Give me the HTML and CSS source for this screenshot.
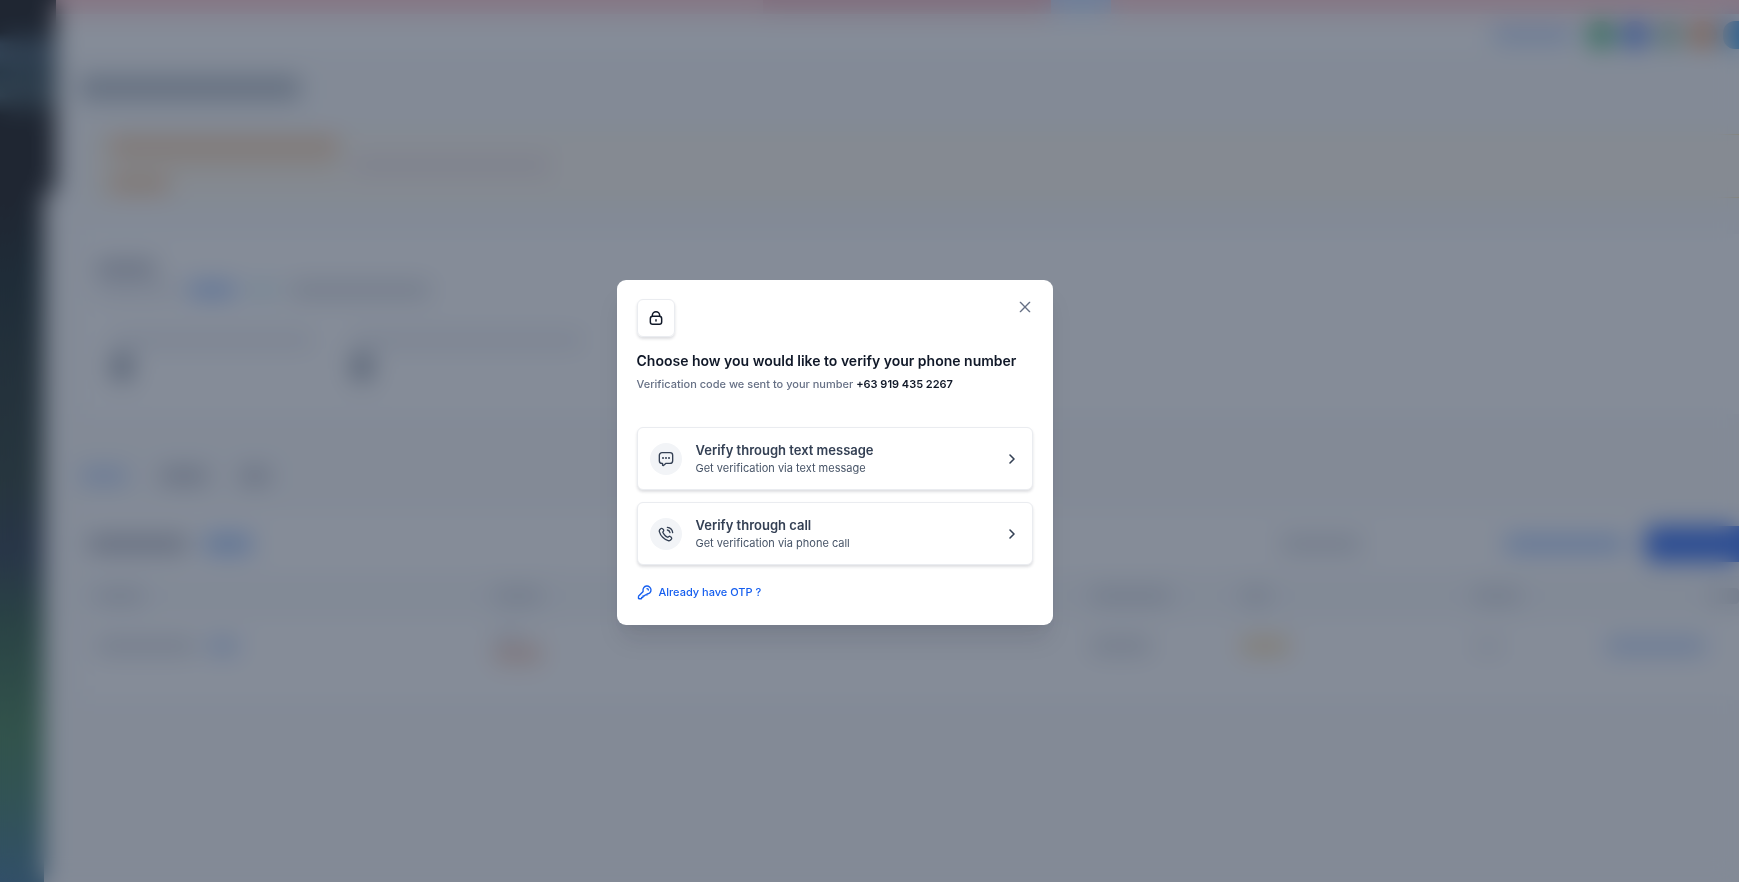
FILE: index.html
```
<!DOCTYPE html>
<html lang="en">
<head>
    <meta charset="UTF-8">
    <meta name="viewport" content="width=device-width, initial-scale=1.0">
    <title>Verify phone number</title>
    <link rel="stylesheet" href="styles.css">
</head>
<body>
    <div class="page" aria-hidden="true">
        <aside class="sidebar">
            <div class="sidebar-top"></div>
            <div class="sidebar-nav"></div>
        </aside>

        <div class="content">
            <div class="notice"><span class="notice-mark"></span><span class="notice-link"></span></div>
            <header class="topbar">
                <span class="bar bar-blue w-80"></span>
                <span class="dot dot-green"></span>
                <span class="dot dot-blue"></span>
                <span class="dot dot-sage"></span>
                <span class="dot dot-orange"></span>
                <span class="dot dot-sky"></span>
            </header>

            <main class="main">
                <div class="page-title"></div>

                <section class="warning">
                    <span class="bar bar-amber w-230"></span>
                    <div class="line">
                        <span class="bar bar-sand w-230"></span>
                        <span class="bar bar-rose w-200"></span>
                    </div>
                    <span class="bar bar-amber w-60"></span>
                </section>

                <section class="panel overview">
                    <span class="bar bar-dark w-60"></span>
                    <div class="line overview-line">
                        <span class="bar bar-light w-80"></span>
                        <span class="bar bar-link w-48"></span>
                        <span class="bar bar-cyan w-30"></span>
                        <span class="bar bar-gray w-140"></span>
                    </div>
                    <div class="stats">
                        <div class="stat"><span class="bar bar-light w-200"></span><span class="figure"></span></div>
                        <div class="stat"><span class="bar bar-light w-230"></span><span class="figure"></span></div>
                    </div>
                </section>

                <nav class="tabs">
                    <span class="bar bar-blue w-48"></span>
                    <span class="bar bar-dark w-48"></span>
                    <span class="bar bar-dark w-30"></span>
                </nav>

                <section class="panel records">
                    <div class="records-head">
                        <span class="bar bar-dark w-100"></span>
                        <span class="bar bar-link w-48"></span>
                        <div class="actions">
                            <span class="bar bar-gray w-80"></span>
                            <span class="bar bar-link w-120"></span>
                            <span class="primary"></span>
                        </div>
                    </div>
                    <table class="table">
                        <thead>
                            <tr>
                                <th class="col-name"><span class="bar bar-gray w-48"></span></th>
                                <th class="col-type"><span class="bar bar-gray w-48"></span></th>
                                <th class="col-owner"><span class="bar bar-gray w-80"></span></th>
                                <th class="col-status"><span class="bar bar-gray w-30"></span></th>
                                <th class="col-count"><span class="bar bar-gray w-48"></span></th>
                                <th><span class="bar bar-gray w-30 to-end"></span></th>
                            </tr>
                        </thead>
                        <tbody>
                            <tr>
                                <td><div class="line"><span class="bar bar-gray w-100"></span><span class="bar bar-blue w-30"></span></div></td>
                                <td><span class="bar bar-light w-30"></span><span class="bar bar-red w-48"></span></td>
                                <td><span class="bar bar-gray w-60"></span></td>
                                <td><span class="bar bar-yellow w-48"></span></td>
                                <td><span class="bar bar-light w-30"></span></td>
                                <td><span class="bar bar-blue w-100"></span></td>
                            </tr>
                        </tbody>
                    </table>
                </section>
            </main>
        </div>
    </div>

    <div class="overlay">
        <div class="modal" role="dialog" aria-modal="true" aria-labelledby="modalTitle">
            <div class="modal-top">
                <div class="modal-icon">
                    <svg width="16" height="16" viewBox="0 0 24 24" fill="none" stroke="currentColor" stroke-width="2.2" stroke-linecap="round" stroke-linejoin="round">
                        <path d="M6.500 9.500V8a5.500 5.500 0 0 1 11 0v1.500"/>
                        <rect x="3.500" y="9.500" width="17" height="12" rx="3.500"/>
                        <path d="M12 14.500v2"/>
                    </svg>
                </div>
                <button class="close" type="button" aria-label="Close">
                    <svg width="16" height="16" viewBox="0 0 24 24" fill="none" stroke="currentColor" stroke-width="2" stroke-linecap="round">
                        <path d="M19 5 5 19M5 5l14 14"/>
                    </svg>
                </button>
            </div>

            <h1 id="modalTitle">Choose how you would like to verify your phone number</h1>
            <p class="subtitle">Verification code we sent to your number <strong>+63 919 435 2267</strong></p>

            <div class="options">
                <button class="option" type="button">
                    <span class="option-icon">
                        <svg width="16" height="16" viewBox="0 0 24 24" fill="none" stroke="currentColor" stroke-width="2" stroke-linecap="round" stroke-linejoin="round">
                            <path d="M6 2.500h12a4 4 0 0 1 4 4v8a4 4 0 0 1-4 4h-6L8.200 21.600c-.6.5-1.400.1-1.400-.6v-2.500H6a4 4 0 0 1-4-4v-8a4 4 0 0 1 4-4z"/>
                            <path stroke-width="3" d="M7.500 10.500h.01M12 10.500h.01M16.500 10.500h.01"/>
                        </svg>
                    </span>
                    <span class="option-text">
                        <span class="option-title">Verify through text message</span>
                        <span class="option-desc">Get verification via text message</span>
                    </span>
                    <svg class="chevron" width="16" height="16" viewBox="0 0 24 24" fill="none" stroke="currentColor" stroke-width="2.400" stroke-linecap="round" stroke-linejoin="round">
                        <path d="m9 18 6-6-6-6"/>
                    </svg>
                </button>
                <button class="option" type="button">
                    <span class="option-icon">
                        <svg width="16" height="16" viewBox="0 0 24 24" fill="none" stroke="currentColor" stroke-width="2" stroke-linecap="round" stroke-linejoin="round">
                            <path d="M14.050 6A5 5 0 0 1 18 9.950M14.050 2A9 9 0 0 1 22 9.940M10.230 13.860a14.600 14.600 0 0 1-2.850-4.010c-.060-.130-.090-.190-.120-.280a1.040 1.040 0 0 1 .150-.870c.050-.070.110-.130.220-.240.350-.350.530-.530.640-.700a2 2 0 0 0 0-2.180c-.110-.180-.290-.350-.640-.700l-.200-.200c-.530-.530-.800-.800-1.080-.940a2 2 0 0 0-1.810 0c-.280.140-.550.410-1.080.940l-.160.160c-.530.530-.800.800-1 1.160-.220.400-.380 1.020-.380 1.480 0 .410.080.690.240 1.250a19 19 0 0 0 4.870 8.270 19 19 0 0 0 8.270 4.870c.560.160.840.240 1.250.240.460 0 1.080-.160 1.480-.380.360-.200.630-.470 1.160-1l.160-.160c.530-.530.800-.800.940-1.080a2 2 0 0 0 0-1.810c-.140-.280-.410-.550-.940-1.080l-.200-.200c-.350-.350-.520-.530-.700-.640a2 2 0 0 0-2.180 0c-.170.110-.350.290-.700.640-.110.110-.170.170-.240.220-.240.170-.590.230-.870.150-.090-.030-.150-.060-.280-.120a14.600 14.600 0 0 1-4.010-2.850z"/>
                        </svg>
                    </span>
                    <span class="option-text">
                        <span class="option-title">Verify through call</span>
                        <span class="option-desc">Get verification via phone call</span>
                    </span>
                    <svg class="chevron" width="16" height="16" viewBox="0 0 24 24" fill="none" stroke="currentColor" stroke-width="2.400" stroke-linecap="round" stroke-linejoin="round">
                        <path d="m9 18 6-6-6-6"/>
                    </svg>
                </button>
            </div>

            <a class="otp-link" href="#otp">
                <svg width="16" height="16" viewBox="0 0 24 24" fill="none" stroke="currentColor" stroke-width="2" stroke-linecap="round" stroke-linejoin="round">
                    <path d="M17 9c0-.5-.2-1-.6-1.400A2 2 0 0 0 15 7m0 8a6 6 0 1 0-5.900-4.900c.1.500.1.700.1.900 0 .2-.1.300-.2.400-.1.200-.2.300-.5.600l-5.300 5.300c-.4.400-.6.500-.7.700l-.2.500c-.1.200-.1.500-.1 1v1.400c0 .4 0 .6.100.8l.3.300c.2.100.4.100.8.100H6c.3 0 .4 0 .5-.2.500-.1.500-.2.500-.5V20h1.500c.3 0 .5-.2.500-.5V18h1.600c.2 0 .4-.1.600-.3l.8-.8c.3-.3.400-.4.600-.500a.9.900 0 0 1 .4-.2c.2-.1.400 0 .900.100.300 0 .700.100 1.100.100z" />
                </svg>
                <span>Already have OTP ?</span>
            </a>
        </div>
    </div>
</body>
</html>
```
FILE: styles.css
```
* {
    box-sizing: border-box;
}
body {
    margin: 0;
    font-family: Inter, Arial, sans-serif;
    background-color: #f9fafb;
    color: #101828;
}
button {
    font-family: inherit;
    cursor: pointer;
}

/* Page behind the dialog */
.page {
    display: flex;
    height: 100vh;
    overflow: hidden;
}
.sidebar {
    display: flex;
    flex-direction: column;
    flex: none;
    width: 56px;
}
.sidebar-top {
    height: 192px;
    background: linear-gradient(#000 32px, #304858 44px, #304858 56px, #183038 72px, #304850 96px, #000 116px);
}
.sidebar-nav {
    flex: 1;
    width: 44px;
    background: linear-gradient(#000, #001010 12%, #0c1c18 25%, #142820 42%, #182838 52%, #1c4830 62%, #307040 78%, #307058 88%, #306888);
}
.content {
    flex: 1;
    min-width: 0;
}
.notice {
    display: flex;
    height: 14px;
    padding-left: 42%;
    background-color: #ffc8cc;
}
.notice-mark {
    width: 288px;
    background-color: #f4b4bc;
}
.notice-link {
    width: 60px;
    background-color: #c8dcff;
}
.topbar {
    display: flex;
    align-items: center;
    justify-content: flex-end;
    gap: 6px;
    height: 42px;
    background-color: #fff;
}
.topbar .bar {
    margin-right: 8px;
}
.dot {
    width: 28px;
    height: 28px;
    border-radius: 50%;
}
.dot-green { background-color: #38b070; }
.dot-blue { background-color: #4878e8; }
.dot-sage { background-color: #98c0a8; }
.dot-orange { background-color: #e89860; }
.dot-sky {
    width: 16px;
    border-radius: 12px 0 0 12px;
    background-color: #2890e0;
}
.main {
    padding-left: 24px;
}
.page-title {
    width: 220px;
    height: 24px;
    margin: 20px 0 34px;
    background-color: #b0bac4;
}
.bar {
    display: block;
    flex: none;
    height: 16px;
    border-radius: 4px;
}
.w-30 { width: 30px; }
.w-48 { width: 48px; }
.w-60 { width: 60px; }
.w-80 { width: 80px; }
.w-100 { width: 100px; }
.w-120 { width: 120px; }
.w-140 { width: 140px; }
.w-200 { width: 200px; }
.w-230 { width: 230px; }
.bar-light { background-color: #e8eaf0; }
.bar-gray { background-color: #d4d8e0; }
.bar-dark { background-color: #b8bcc8; }
.bar-blue { background-color: #b8d0f8; }
.bar-link { background-color: #a0c4fc; }
.bar-cyan { background-color: #d8f0f8; }
.bar-amber { background-color: #f4c8a0; }
.bar-sand { background-color: #f8e8d0; }
.bar-rose { background-color: #ece0e0; }
.bar-red { background-color: #f4c8b4; }
.bar-yellow { background-color: #f8d8a0; }
.line {
    display: flex;
    align-items: center;
    gap: 12px;
}
.warning {
    display: flex;
    flex-direction: column;
    gap: 4px;
    height: 64px;
    margin-left: 12px;
    padding: 2px 16px;
    border: 1px solid #fedf89;
    border-right: 0;
    background-color: #fffaf0;
}
.panel {
    background-color: #fff;
}
.overview {
    height: 180px;
    margin-top: 36px;
    padding: 26px 16px 0;
}
.overview-line {
    margin-top: 6px;
}
.stats {
    display: flex;
    gap: 40px;
    margin-top: 34px;
    padding-left: 16px;
}
.figure {
    display: block;
    width: 20px;
    height: 26px;
    margin-top: 6px;
    background-color: #909aa8;
}
.tabs {
    display: flex;
    gap: 32px;
    padding: 54px 0 28px;
}
.records-head {
    display: flex;
    align-items: center;
    gap: 16px;
    height: 64px;
    padding-left: 8px;
}
.records-head > .bar {
    height: 20px;
}
.actions {
    display: flex;
    align-items: center;
    margin-left: auto;
}
.actions .w-80 { margin-right: 144px; }
.actions .w-120 { margin-right: 20px; }
.primary {
    width: 94px;
    height: 36px;
    border-radius: 8px 0 0 8px;
    background-color: #2060f0;
}
.table {
    width: 100%;
    border-collapse: collapse;
    table-layout: fixed;
}
.table th, .table td {
    padding: 0 0 0 16px;
}
.table th {
    height: 40px;
    background-color: #f6f8fa;
}
.table td {
    height: 84px;
    padding-bottom: 24px;
}
.col-name { width: 24%; }
.col-type { width: 36%; }
.col-owner { width: 9%; }
.col-status { width: 14%; }
.col-count { width: 8%; }
.to-end { margin-left: auto; }

/* Verification dialog */
.overlay {
    position: fixed;
    inset: 0;
    display: flex;
    align-items: center;
    justify-content: center;
    padding: 23px 70px 0 0;
    background-color: rgba(52, 64, 84, 0.6);
    backdrop-filter: blur(12px);
}
.modal {
    width: 436px;
    padding: 19px 20px 20px;
    border-radius: 9px;
    background-color: #fff;
    box-shadow: 0 18px 24px -4px rgba(16, 24, 40, 0.1), 0 8px 8px -4px rgba(16, 24, 40, 0.04);
}
.modal-top {
    display: flex;
    justify-content: space-between;
    align-items: flex-start;
}
.modal-icon {
    display: grid;
    place-items: center;
    width: 38px;
    height: 38px;
    border: 1px solid #eaecf0;
    border-radius: 6px;
    box-shadow: 0 2px 3px rgba(16, 24, 40, 0.14);
}
.close {
    display: flex;
    padding: 0;
    border: none;
    background: none;
    color: #667085;
}
h1 {
    margin: 14px 0 0;
    font-size: 14px;
    font-weight: 600;
    line-height: 20px;
}
.subtitle {
    margin: 4px 0 0;
    font-size: 11px;
    font-weight: 500;
    line-height: 18px;
    color: #667085;
}
.subtitle strong {
    font-weight: 600;
    color: #101828;
}
.options {
    display: flex;
    flex-direction: column;
    gap: 12px;
    margin-top: 34px;
}
.option {
    display: flex;
    align-items: center;
    gap: 14px;
    height: 63px;
    padding: 0 12px;
    border: 1px solid #eaecf0;
    border-radius: 6px;
    background-color: #fff;
    box-shadow: 0 2px 3px rgba(16, 24, 40, 0.14);
    color: #344054;
    text-align: left;
}
.option-icon {
    display: grid;
    place-items: center;
    width: 32px;
    height: 32px;
    border-radius: 50%;
    background-color: #f2f4f7;
}
.option-text {
    display: flex;
    flex: 1;
    flex-direction: column;
}
.option-title {
    font-size: 13px;
    font-weight: 600;
    line-height: 18px;
}
.option-desc {
    font-size: 11px;
    line-height: 18px;
    color: #475467;
}
.otp-link {
    display: flex;
    align-items: center;
    gap: 6px;
    width: fit-content;
    margin: 18px 0 4px;
    font-size: 11px;
    font-weight: 500;
    line-height: 18px;
    color: #155eef;
    text-decoration: none;
}
```
